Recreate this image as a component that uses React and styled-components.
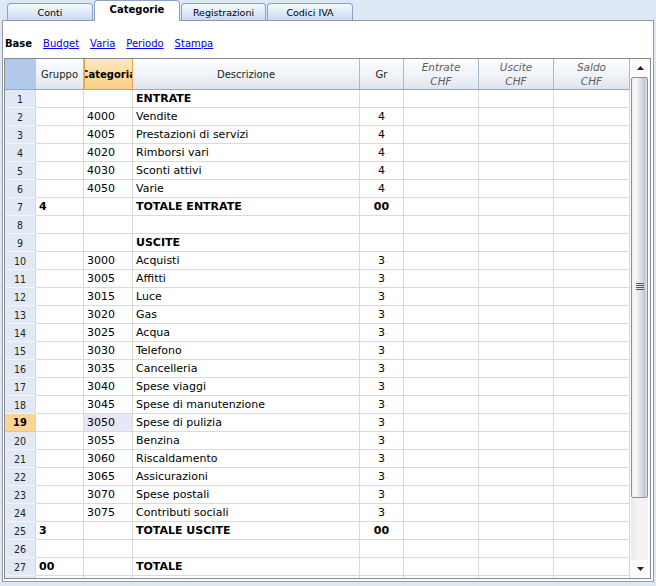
import styled, { createGlobalStyle, css } from "styled-components";

const GlobalStyle = createGlobalStyle`
  html, body {
    margin: 0;
    padding: 0;
    background: #dce8f6;
    font-family: "DejaVu Sans", Verdana, sans-serif;
    color: #000;
  }
`;

const Page = styled.div`
  width: 656px;
  height: 586px;
  overflow: hidden;
`;

const TabBar = styled.div`
  display: flex;
  align-items: flex-end;
  gap: 1px;
  height: 20px;
  padding-left: 7px;
`;

const Tab = styled.div`
  box-sizing: border-box;
  width: ${(p) => p.$w}px;
  height: 17px;
  display: flex;
  align-items: center;
  justify-content: center;
  font-size: 9.5px;
  border: 1px solid #8aa2c4;
  border-bottom: none;
  border-radius: 4px 4px 0 0;
  background: linear-gradient(#f6f9fe, #c9dbf5);
  ${(p) =>
    p.$active &&
    css`
      position: relative;
      z-index: 1;
      height: 21px;
      margin-bottom: -1px;
      padding-bottom: 3px;
      background: #fff;
      font-size: 10px;
      font-weight: bold;
    `}
`;

const Panel = styled.div`
  box-sizing: border-box;
  margin-left: 2px;
  width: 652px;
  height: 562px;
  border: 1px solid #9a9a9a;
  background: #fff;
  padding: 0 2px 2px 1px;
`;

const LinkBar = styled.div`
  box-sizing: border-box;
  height: 37px;
  display: flex;
  align-items: center;
  gap: 11px;
  padding: 7px 0 0 1px;
  font-size: 10px;
`;

const Current = styled.span`
  font-weight: bold;
`;

const Link = styled.a`
  color: #0000ee;
  text-decoration: underline;
  cursor: pointer;
`;

const Grid = styled.div`
  display: flex;
  border: 1px solid #858a92;
  height: 519px;
`;

const Table = styled.div`
  width: 625px;
  display: flex;
  flex-direction: column;
`;

const HeaderRow = styled.div`
  display: flex;
  height: 31px;
  box-sizing: border-box;
  border-bottom: 1px solid #93a8c4;
`;

const HeadCell = styled.div`
  box-sizing: border-box;
  flex: none;
  width: ${(p) => p.$w}px;
  display: flex;
  flex-direction: column;
  align-items: center;
  justify-content: center;
  overflow: hidden;
  white-space: nowrap;
  font-size: 10px;
  color: #222;
  border-right: 1px solid #a9b9cd;
  background: linear-gradient(#fcfdfe, #f1f4f8 50%, #dfe5ee);
  ${(p) =>
    p.$italic &&
    css`
      font-style: italic;
      color: #5e5e5e;
      font-size: 10.5px;
      line-height: 14px;
    `}
  ${(p) =>
    p.$active &&
    css`
      font-weight: bold;
      color: #000;
      background: linear-gradient(#fde9be, #f9cf86);
      border-right-color: #e4a648;
      border-left: 1px solid #e4a648;
    `}
  ${(p) =>
    p.$corner &&
    css`
      background: #b3c9ec;
      border-right-color: #b3c9ec;
    `}
`;

const Body = styled.div`
  height: 488px;
  overflow: hidden;
`;

const Row = styled.div`
  display: flex;
  height: 18px;
  box-sizing: border-box;
  border-bottom: 1px solid #dadada;
`;

const NumCell = styled.div`
  box-sizing: border-box;
  width: 31px;
  flex: none;
  display: flex;
  align-items: center;
  justify-content: center;
  font-family: "DejaVu Sans Condensed", "DejaVu Sans", sans-serif;
  font-size: 10.5px;
  color: #222;
  background: #e1e9f4;
  border-right: 1px solid #cfd9e6;
  margin-bottom: -1px;
  border-bottom: 1px solid #f2f5fa;
  ${(p) =>
    p.$sel &&
    css`
      background: #fcd595;
      border-bottom-color: #f1c27a;
      font-weight: bold;
      font-size: 11px;
      color: #000;
    `}
`;

const Cell = styled.div`
  box-sizing: border-box;
  flex: none;
  width: ${(p) => p.$w}px;
  display: flex;
  align-items: center;
  justify-content: ${(p) => (p.$align === "center" ? "center" : "flex-start")};
  padding-left: ${(p) => (p.$align === "center" ? 0 : 3)}px;
  overflow: hidden;
  white-space: nowrap;
  font-size: 11px;
  font-weight: ${(p) => (p.$bold ? "bold" : "normal")};
  border-right: 1px solid #dadada;
  background: ${(p) => (p.$sel ? "#e7e7f7" : "transparent")};
`;

const Scrollbar = styled.div`
  width: 20px;
  display: flex;
  flex-direction: column;
  background: #fbfbfb;
`;

const ArrowButton = styled.div`
  height: 18px;
  flex: none;
  display: flex;
  align-items: center;
  justify-content: center;
  padding-left: 1px;
`;

const Thumb = styled.div`
  box-sizing: border-box;
  flex: none;
  height: 421px;
  margin: 0 2px 0 1px;
  border: 1px solid #8e8e96;
  border-radius: 2px;
  background: linear-gradient(
    to right,
    #eeeef2,
    #f8f8fb 25%,
    #dcdce6 60%,
    #c6c6d2 85%,
    #e4e4ea
  );
  display: flex;
  align-items: center;
  justify-content: center;
  padding-bottom: 2px;
`;

const Track = styled.div`
  flex: 1;
  margin: 0 2px 0 1px;
  background: linear-gradient(to right, #ece8ee, #f6f2f6 40%, #f4f0f4);
`;

const Grip = () => (
  <svg width="8" height="8" viewBox="0 0 8 8">
    {[0, 2, 4, 6].map((y) => (
      <rect key={y} x="0" y={y} width="8" height="1" fill="#55555c" />
    ))}
  </svg>
);

const Arrow = ({ down }) => (
  <svg width="7" height="4" viewBox="0 0 7 4">
    <path d={down ? "M0 0H7L3.5 4Z" : "M0 4H7L3.5 0Z"} fill="#222" />
  </svg>
);

const tabs = [
  { label: "Conti", w: 86 },
  { label: "Categorie", w: 86, active: true },
  { label: "Registrazioni", w: 85 },
  { label: "Codici IVA", w: 86 },
];

const links = ["Budget", "Varia", "Periodo", "Stampa"];

const columns = [
  { key: "g", w: 48, title: "Gruppo" },
  { key: "c", w: 49, title: "Categoria", active: true },
  { key: "d", w: 227, title: "Descrizione" },
  { key: "gr", w: 44, title: "Gr", align: "center" },
  { key: "e", w: 75, title: ["Entrate", "CHF"] },
  { key: "u", w: 75, title: ["Uscite", "CHF"] },
  { key: "s", w: 76, title: ["Saldo", "CHF"] },
];

const rows = [
  { d: "ENTRATE", bold: true },
  { c: "4000", d: "Vendite", gr: "4" },
  { c: "4005", d: "Prestazioni di servizi", gr: "4" },
  { c: "4020", d: "Rimborsi vari", gr: "4" },
  { c: "4030", d: "Sconti attivi", gr: "4" },
  { c: "4050", d: "Varie", gr: "4" },
  { g: "4", d: "TOTALE ENTRATE", gr: "00", bold: true },
  {},
  { d: "USCITE", bold: true },
  { c: "3000", d: "Acquisti", gr: "3" },
  { c: "3005", d: "Affitti", gr: "3" },
  { c: "3015", d: "Luce", gr: "3" },
  { c: "3020", d: "Gas", gr: "3" },
  { c: "3025", d: "Acqua", gr: "3" },
  { c: "3030", d: "Telefono", gr: "3" },
  { c: "3035", d: "Cancelleria", gr: "3" },
  { c: "3040", d: "Spese viaggi", gr: "3" },
  { c: "3045", d: "Spese di manutenzione", gr: "3" },
  { c: "3050", d: "Spese di pulizia", gr: "3", sel: true },
  { c: "3055", d: "Benzina", gr: "3" },
  { c: "3060", d: "Riscaldamento", gr: "3" },
  { c: "3065", d: "Assicurazioni", gr: "3" },
  { c: "3070", d: "Spese postali", gr: "3" },
  { c: "3075", d: "Contributi sociali", gr: "3" },
  { g: "3", d: "TOTALE USCITE", gr: "00", bold: true },
  {},
  { g: "00", d: "TOTALE", bold: true },
  { partial: true },
];

export default function App() {
  return (
    <Page>
      <GlobalStyle />
      <TabBar>
        {tabs.map((t) => (
          <Tab key={t.label} $w={t.w} $active={t.active}>
            {t.label}
          </Tab>
        ))}
      </TabBar>

      <Panel>
        <LinkBar>
          <Current>Base</Current>
          {links.map((l) => (
            <Link key={l}>{l}</Link>
          ))}
        </LinkBar>

        <Grid>
          <Table>
            <HeaderRow>
              <HeadCell $w={31} $corner />
              {columns.map((col) => (
                <HeadCell
                  key={col.key}
                  $w={col.w}
                  $active={col.active}
                  $italic={Array.isArray(col.title)}
                >
                  {Array.isArray(col.title)
                    ? col.title.map((line) => <span key={line}>{line}</span>)
                    : col.title}
                </HeadCell>
              ))}
            </HeaderRow>

            <Body>
              {rows.map((row, i) => (
                <Row key={i}>
                  <NumCell $sel={row.sel}>{row.partial ? "" : i + 1}</NumCell>
                  {columns.map((col) => (
                    <Cell
                      key={col.key}
                      $w={col.w}
                      $align={col.align}
                      $bold={row.bold && col.key !== "c"}
                      $sel={row.sel && col.key === "c"}
                    >
                      {row[col.key]}
                    </Cell>
                  ))}
                </Row>
              ))}
            </Body>
          </Table>

          <Scrollbar>
            <ArrowButton>
              <Arrow />
            </ArrowButton>
            <Thumb>
              <Grip />
            </Thumb>
            <Track />
            <ArrowButton>
              <Arrow down />
            </ArrowButton>
          </Scrollbar>
        </Grid>
      </Panel>
    </Page>
  );
}
